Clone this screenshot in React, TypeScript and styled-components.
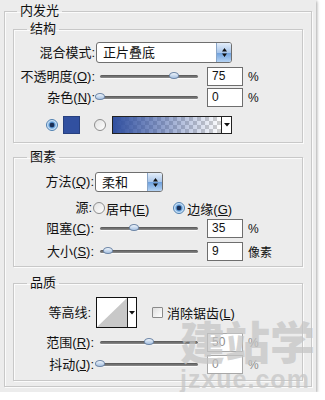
import React from 'react';
import styled, { createGlobalStyle } from 'styled-components';

const GlobalStyle = createGlobalStyle`
    body {
        margin: 0;
        background: #ffffff;
        font-family: "Liberation Sans", "Noto Sans CJK SC", sans-serif;
        color: #111;
    }
`;

const Panel = styled.div`
    position: relative;
    width: 316px;
    height: 392px;
    box-sizing: border-box;
    padding: 3px 0 0 4px;
    background: #ececec;
    box-shadow: 1px 1px 3px rgba(0, 0, 0, 0.35);
    overflow: hidden;
`;

const Group = styled.fieldset<{ $outer?: boolean; $mt?: number; $pb?: number }>`
    box-sizing: border-box;
    width: ${(p) => (p.$outer ? '308px' : '100%')};
    margin: ${(p) => p.$mt ?? 0}px 0 0 0;
    padding: 0 ${(p) => (p.$outer ? '8px' : '0')} ${(p) => p.$pb ?? 0}px ${(p) => (p.$outer ? '8px' : '0')};
    border: 1px solid #c8c8c8;
    box-shadow: 1px 1px 0 #fbfbfb, inset 1px 1px 0 #fbfbfb;
    min-width: 0;
`;

const Legend = styled.legend<{ $ml: number }>`
    margin-left: ${(p) => p.$ml}px;
    padding: 0 3px;
    font-size: 13px;
    line-height: 16px;
    height: 16px;
`;

const Row = styled.div<{ $h: number; $mt: number; $pl?: number }>`
    display: flex;
    align-items: center;
    height: ${(p) => p.$h}px;
    margin-top: ${(p) => p.$mt}px;
    padding-left: ${(p) => p.$pl ?? 0}px;
    font-size: 13px;
    white-space: nowrap;
`;

const Label = styled.div<{ $w?: number }>`
    width: ${(p) => p.$w ?? 81}px;
    flex-shrink: 0;
    text-align: right;
    font-size: 13px;
    line-height: 16px;

    u {
        text-underline-offset: 1px;
    }
`;

const Select = styled.div<{ $w: number; $h: number }>`
    display: flex;
    box-sizing: border-box;
    width: ${(p) => p.$w}px;
    height: ${(p) => p.$h}px;
    margin-left: 1px;
    border: 1px solid #6f6f6f;
    border-radius: 3px;
    background: #fff;
    overflow: hidden;
`;

const SelectText = styled.div`
    flex: 1;
    padding-left: 6px;
    font-size: 13px;
    line-height: 19px;
`;

const SelectButton = styled.div`
    width: 14px;
    display: flex;
    align-items: center;
    justify-content: center;
    border-left: 1px solid #8aa6c8;
    background: linear-gradient(#e4eefa, #a9c6ea 50%, #6d9fdc 51%, #b5d3f3);
`;

const Track = styled.div<{ $ml?: number }>`
    position: relative;
    width: 98px;
    height: 3px;
    margin-left: ${(p) => p.$ml ?? 5}px;
    border-radius: 2px;
    background: linear-gradient(#555, #8d8d8d);
    box-shadow: 0 1px 0 #fafafa;
    flex-shrink: 0;
`;

const Thumb = styled.div`
    position: absolute;
    top: -3px;
    width: 10px;
    height: 7px;
    margin-left: -5px;
    box-sizing: border-box;
    border: 1px solid #7088a8;
    border-radius: 50% 50% 45% 45%;
    background: linear-gradient(#eef4fb, #a8c2e2);
`;

const Field = styled.div<{ $dim?: boolean }>`
    box-sizing: border-box;
    width: 36px;
    height: 19px;
    margin-left: 9px;
    padding-left: 4px;
    border: 1px solid ${(p) => (p.$dim ? '#a8a8a8' : '#6e6e6e')};
    background: #fff;
    color: ${(p) => (p.$dim ? '#8c8c8c' : '#111')};
    font-size: 12px;
    line-height: 17px;
    flex-shrink: 0;
`;

const Unit = styled.div<{ $dim?: boolean }>`
    margin-left: 5px;
    font-size: 12px;
    color: ${(p) => (p.$dim ? '#8c8c8c' : '#111')};
`;

const Radio = styled.div<{ $on?: boolean; $ml?: number }>`
    box-sizing: border-box;
    width: 12px;
    height: 12px;
    margin-left: ${(p) => p.$ml ?? 0}px;
    border-radius: 50%;
    flex-shrink: 0;
    border: 1px solid ${(p) => (p.$on ? '#4d7fb0' : '#8e8e8e')};
    background: ${(p) =>
        p.$on
            ? 'radial-gradient(circle, #1b2f55 0 2px, #4f8bc8 2.6px, #bcdaf6 4.2px, #f4f9fe 6px)'
            : 'linear-gradient(135deg, #e2e2e2, #ffffff)'};
`;

const RadioText = styled.div<{ $ml?: number }>`
    margin-left: ${(p) => p.$ml ?? 2}px;
    font-size: 13px;
`;

const Swatch = styled.div`
    width: 17px;
    height: 18px;
    margin-left: 5px;
    box-sizing: border-box;
    border: 1px solid #27407f;
    background: #3150a0;
`;

const GradientBox = styled.div`
    display: flex;
    box-sizing: border-box;
    width: 120px;
    height: 18px;
    margin-left: 6px;
    border: 1px solid #222;
`;

const GradientFill = styled.div`
    flex: 1;
    background:
        linear-gradient(to right, #3150a0, rgba(49, 80, 160, 0)),
        repeating-conic-gradient(#cfcfcf 0 25%, #ffffff 0 50%) 0 0 / 8px 8px;
`;

const DropPart = styled.div<{ $w?: number }>`
    width: ${(p) => p.$w ?? 9}px;
    display: flex;
    align-items: center;
    justify-content: center;
    border-left: 1px solid #222;
    background: #fff;
`;

const Contour = styled.div`
    display: flex;
    box-sizing: border-box;
    width: 41px;
    height: 31px;
    margin-left: 5px;
    border: 1px solid #111;
    background: #fff;
`;

const ContourGraph = styled.div`
    flex: 1;
    display: flex;
`;

const Check = styled.div`
    box-sizing: border-box;
    width: 11px;
    height: 11px;
    margin-left: 15px;
    border: 1px solid #8a8a8a;
    border-radius: 1px;
    background: linear-gradient(135deg, #dedede, #ffffff);
`;

const Watermark = styled.div`
    position: absolute;
    left: 180px;
    top: 319px;
    width: 140px;
    display: flex;
    flex-direction: column;
    align-items: flex-start;
    white-space: nowrap;
    color: rgba(196, 196, 196, 0.72);
    pointer-events: none;
`;

const WatermarkBig = styled.div`
    font-family: "Noto Sans CJK SC", sans-serif;
    font-weight: 900;
    font-size: 45px;
    line-height: 44px;
`;

const WatermarkSmall = styled.div`
    margin-top: 5px;
    font-family: "Liberation Sans", sans-serif;
    font-weight: bold;
    font-size: 25px;
    line-height: 22px;
    letter-spacing: 1px;
`;

const UpDown = () => (
    <svg width="7" height="11" viewBox="0 0 7 11">
        <path d="M3.5 1 L6 4.5 H1 Z M3.5 10 L6 6.5 H1 Z" fill="#111" />
    </svg>
);

const Caret = () => (
    <svg width="6" height="4" viewBox="0 0 6 4">
        <path d="M0 0 H6 L3 3.5 Z" fill="#111" />
    </svg>
);

const Slider: React.FC<{ value: number; ml?: number }> = ({ value, ml }) => (
    <Track $ml={ml}>
        <Thumb style={{ left: `${value}%` }} />
    </Track>
);

const SliderRow: React.FC<{
    label: React.ReactNode;
    value: number;
    text: string;
    unit: string;
    h: number;
    mt: number;
    lw?: number;
    dim?: boolean;
}> = ({ label, value, text, unit, h, mt, lw, dim }) => (
    <Row $h={h} $mt={mt}>
        <Label $w={lw}>{label}</Label>
        <Slider value={value} ml={lw ? 5 + (81 - lw) : 5} />
        <Field $dim={dim}>{text}</Field>
        <Unit $dim={dim}>{unit}</Unit>
    </Row>
);

export default function App() {
    return (
        <>
            <GlobalStyle />
            <Panel>
                <Group $outer $pb={5}>
                    <Legend $ml={4}>内发光</Legend>

                    <Group $mt={2} $pb={8}>
                        <Legend $ml={13}>结构</Legend>
                        <Row $h={21} $mt={5}>
                            <Label>混合模式:</Label>
                            <Select $w={136} $h={21}>
                                <SelectText>正片叠底</SelectText>
                                <SelectButton>
                                    <UpDown />
                                </SelectButton>
                            </Select>
                        </Row>
                        <SliderRow
                            label={<>不透明度(<u>O</u>):</>}
                            value={75}
                            text="75"
                            unit="%"
                            h={19}
                            mt={4}
                        />
                        <SliderRow
                            label={<>杂色(<u>N</u>):</>}
                            value={0}
                            text="0"
                            unit="%"
                            h={19}
                            mt={2}
                        />
                        <Row $h={18} $mt={9} $pl={32}>
                            <Radio $on />
                            <Swatch />
                            <Radio $ml={14} />
                            <GradientBox>
                                <GradientFill />
                                <DropPart>
                                    <Caret />
                                </DropPart>
                            </GradientBox>
                        </Row>
                    </Group>

                    <Group $mt={6} $pb={5}>
                        <Legend $ml={13}>图素</Legend>
                        <Row $h={20} $mt={7}>
                            <Label $w={80}>方法(<u>Q</u>):</Label>
                            <Select $w={68} $h={20}>
                                <SelectText>柔和</SelectText>
                                <SelectButton>
                                    <UpDown />
                                </SelectButton>
                            </Select>
                        </Row>
                        <Row $h={18} $mt={7}>
                            <Label $w={78}>源:</Label>
                            <Radio $ml={1} />
                            <RadioText $ml={1}>居中(<u>E</u>)</RadioText>
                            <Radio $on $ml={24} />
                            <RadioText $ml={2}>边缘(<u>G</u>)</RadioText>
                        </Row>
                        <SliderRow
                            label={<>阻塞(<u>C</u>):</>}
                            value={35}
                            text="35"
                            unit="%"
                            h={19}
                            mt={2}
                            lw={80}
                        />
                        <SliderRow
                            label={<>大小(<u>S</u>):</>}
                            value={8}
                            text="9"
                            unit="像素"
                            h={19}
                            mt={4}
                            lw={80}
                        />
                    </Group>

                    <Group $mt={8} $pb={6}>
                        <Legend $ml={13}>品质</Legend>
                        <Row $h={31} $mt={6}>
                            <Label $w={77}>等高线:</Label>
                            <Contour>
                                <ContourGraph>
                                    <svg width="30" height="29" viewBox="0 0 30 29">
                                        <path d="M0 29 L30 0 V29 Z" fill="#c8c8c8" />
                                    </svg>
                                </ContourGraph>
                                <DropPart>
                                    <Caret />
                                </DropPart>
                            </Contour>
                            <Check />
                            <RadioText $ml={4}>消除锯齿(<u>L</u>)</RadioText>
                        </Row>
                        <SliderRow
                            label={<>范围(<u>R</u>):</>}
                            value={50}
                            text="50"
                            unit="%"
                            h={19}
                            mt={5}
                            lw={80}
                            dim
                        />
                        <SliderRow
                            label={<>抖动(<u>J</u>):</>}
                            value={0}
                            text="0"
                            unit="%"
                            h={19}
                            mt={3}
                            lw={80}
                            dim
                        />
                    </Group>
                </Group>
                <Watermark>
                    <WatermarkBig>建站学</WatermarkBig>
                    <WatermarkSmall>jzxue.com</WatermarkSmall>
                </Watermark>
            </Panel>
        </>
    );
}
